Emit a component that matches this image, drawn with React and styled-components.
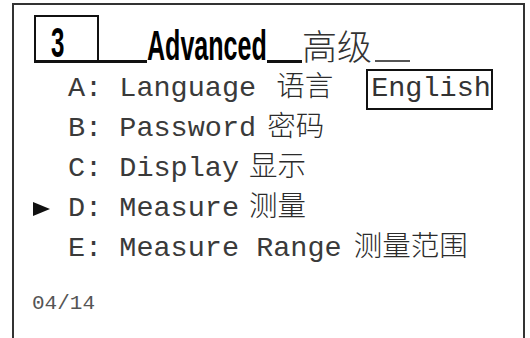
import React from 'react';
import styled, { createGlobalStyle } from 'styled-components';

const Global = createGlobalStyle`
  html, body {
    margin: 0;
    padding: 0;
    background: #fff;
    overflow: hidden;
  }
`;

const Screen = styled.div`
  box-sizing: border-box;
  width: 513px;
  height: 400px;
  margin: 3px 0 0 12px;
  padding: 10px 0 0 20px;
  border: 2px solid #333;
  border-bottom: none;
  display: flex;
  flex-direction: column;
`;

const TitleRow = styled.div`
  display: flex;
  align-items: flex-end;
  height: 48px;
  color: #000;
`;

const NumBox = styled.div`
  box-sizing: border-box;
  width: 65px;
  height: 48px;
  border: 2px solid #111;
  border-bottom-width: 3px;
  display: flex;
  align-items: flex-end;
`;

const Condensed = styled.div`
  width: ${p => p.$w}px;
  height: 30px;
  margin: 0 0 3px ${p => p.$ml || 0}px;
  font-family: "Liberation Sans", Arial, sans-serif;
  font-weight: 700;
  font-size: 43px;
  line-height: 30px;
  white-space: nowrap;

  span {
    display: inline-block;
    transform: scaleX(${p => p.$sx});
    transform-origin: left bottom;
  }
`;

const Bar = styled.div`
  width: ${p => p.$w}px;
  height: ${p => p.$h}px;
  margin: 0 0 ${p => p.$mb || 0}px ${p => p.$ml || 0}px;
  background: ${p => p.$c || '#111'};
`;

const TitleCn = styled.div`
  font-family: "Noto Sans CJK SC", sans-serif;
  font-weight: 300;
  font-size: 35px;
  line-height: 30px;
  height: 30px;
  margin-bottom: 3px;
  color: #333;
  white-space: nowrap;
`;

const Menu = styled.div`
  display: flex;
  flex-direction: column;
  margin-top: 6px;
`;

const Row = styled.div`
  display: flex;
  align-items: baseline;
  height: 40px;
  color: #3a3a3a;
`;

const Marker = styled.div`
  width: 34px;
  margin-left: -1px;
  align-self: center;
  display: flex;
  align-items: center;
`;

const Label = styled.span`
  margin-left: 1px;
  font-family: "Liberation Mono", "Courier New", monospace;
  font-size: 28.5px;
  line-height: 40px;
  white-space: pre;
`;

const Cn = styled.span`
  font-family: "Noto Sans CJK SC", sans-serif;
  font-weight: 300;
  font-size: 28.5px;
  line-height: 30px;
  margin-left: ${p => p.$ml}px;
  white-space: nowrap;
  color: #2b2b2b;
`;

const Value = styled.span`
  margin-left: 33px;
  padding: 0 0 1px 3px;
  border: 2px solid #111;
  font-family: "Liberation Mono", "Courier New", monospace;
  font-size: 28.5px;
  line-height: 36px;
  color: #333;
`;

const Footer = styled.div`
  margin: 24px 0 0 -2px;
  font-family: "Liberation Mono", "Courier New", monospace;
  font-size: 21px;
  line-height: 21px;
  color: #555;
`;

const items = [
  { key: 'A', en: 'Language', cn: '语言', gap: 20, value: 'English' },
  { key: 'B', en: 'Password', cn: '密码', gap: 11 },
  { key: 'C', en: 'Display', cn: '显示', gap: 10 },
  { key: 'D', en: 'Measure', cn: '测量', gap: 10, active: true },
  { key: 'E', en: 'Measure Range', cn: '测量范围', gap: 12 },
];

export default function App() {
  return (
    <>
      <Global />
      <Screen>
        <TitleRow>
          <NumBox>
            <Condensed $w={30} $ml={15} $sx={0.56}><span>3</span></Condensed>
          </NumBox>
          <Bar $w={48} $h={3} />
          <Condensed $w={120} $sx={0.583}><span>Advanced</span></Condensed>
          <Bar $w={35} $h={3} />
          <TitleCn>高级</TitleCn>
          <Bar $w={35} $h={2} $ml={3} $mb={1} $c="#555" />
        </TitleRow>
        <Menu>
          {items.map(it => (
            <Row key={it.key}>
              <Marker>
                {it.active && (
                  <svg width="17" height="14" viewBox="0 0 17 14">
                    <polygon points="0,0 17,7 0,14" fill="#111" />
                  </svg>
                )}
              </Marker>
              <Label>{`${it.key}: ${it.en}`}</Label>
              <Cn $ml={it.gap}>{it.cn}</Cn>
              {it.value && <Value>{it.value}</Value>}
            </Row>
          ))}
        </Menu>
        <Footer>04/14</Footer>
      </Screen>
    </>
  );
}
